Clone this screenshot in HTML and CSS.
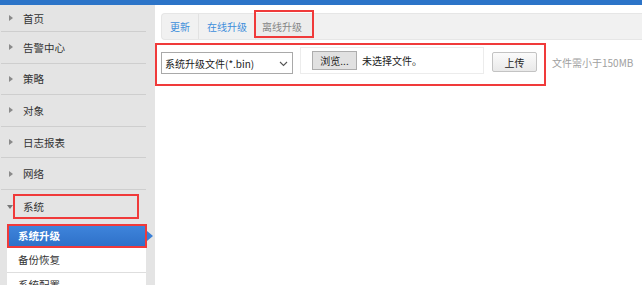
FILE: index.html
```html
<!DOCTYPE html>
<html lang="zh-CN">
<head>
<meta charset="utf-8">
<title>系统升级</title>
<link rel="stylesheet" href="styles.css">
</head>
<body>
<div class="topbar"></div>
<div class="layout">
  <aside class="sidebar">
    <ul class="menu">
      <li class="menu-item first"><span class="caret"></span><span class="label">首页</span></li>
      <li class="menu-item"><span class="caret"></span><span class="label">告警中心</span></li>
      <li class="menu-item"><span class="caret"></span><span class="label">策略</span></li>
      <li class="menu-item"><span class="caret"></span><span class="label">对象</span></li>
      <li class="menu-item"><span class="caret"></span><span class="label">日志报表</span></li>
      <li class="menu-item"><span class="caret"></span><span class="label">网络</span></li>
      <li class="menu-item open"><span class="caret down"></span><span class="label mark">系统</span></li>
    </ul>
    <ul class="submenu">
      <li class="sub active">系统升级<span class="pointer"></span></li>
      <li class="sub">备份恢复</li>
      <li class="sub">系统配置</li>
    </ul>
  </aside>
  <main class="main">
    <nav class="tabs">
      <span class="tab">更新</span>
      <span class="tab">在线升级</span>
      <span class="tab active">离线升级</span>
    </nav>
    <div class="form-row">
      <div class="upload-box">
        <div class="select">
          <span>系统升级文件(*.bin)</span>
          <svg class="chev" width="9" height="6" viewBox="0 0 9 6"><path d="M1 1 L4.5 4.5 L8 1" fill="none" stroke="#555" stroke-width="1.1"/></svg>
        </div>
        <div class="file">
          <span class="btn browse">浏览...</span>
          <span class="file-name">未选择文件。</span>
        </div>
        <span class="btn upload">上传</span>
      </div>
      <span class="hint">文件需小于150MB</span>
    </div>
  </main>
</div>
</body>
</html>
```
FILE: styles.css
```css
* { box-sizing: border-box; }
html, body { margin: 0; padding: 0; }
body {
  width: 642px;
  height: 285px;
  overflow: hidden;
  background: #fff;
  font-family: "Noto Sans CJK SC", "Noto Sans", sans-serif;
  font-size: 10px;
  color: #333;
}
ul { list-style: none; margin: 0; padding: 0; }

.topbar { height: 5px; background: #2c74c8; }

.layout { display: flex; height: 280px; }

.sidebar {
  width: 155px;
  flex: none;
  background: #e4e4e4;
}
.menu { margin-left: 1px; width: 145px; }
.menu-item {
  display: flex;
  align-items: center;
  height: 31.6px;
  border-bottom: 1px solid #cecece;
  font-size: 10.5px;
}
.menu-item.first { height: 27px; }
.menu-item.open { height: 34px; border-bottom: none; align-items: flex-start; padding-top: 4px; }
.caret {
  width: 0; height: 0;
  border-top: 3px solid transparent;
  border-bottom: 3px solid transparent;
  border-left: 4px solid #8a8a8a;
  margin-left: 8px;
  margin-right: 10px;
}
.caret.down {
  border-left: 3px solid transparent;
  border-right: 3px solid transparent;
  border-top: 4px solid #777;
  border-bottom: none;
  margin-left: 6px;
  margin-right: 0;
  margin-top: 11px;
}
.mark {
  display: flex;
  align-items: center;
  width: 126px;
  height: 25px;
  padding-left: 8px;
  border: 2px solid #f03a3a;
}

.submenu { margin-left: 7px; width: 139px; background: #fff; font-size: 10.5px; }
.sub {
  height: 25px;
  display: flex;
  align-items: center;
  padding-left: 11px;
  border-bottom: 1px solid #dedede;
}
.sub.active {
  position: relative;
  height: 24px;
  width: 140px;
  padding-left: 9px;
  color: #fff;
  font-weight: bold;
  background: linear-gradient(#3e84db, #2f71c9);
  border: 2px solid #f03a3a;
}
.pointer {
  position: absolute;
  right: -8px;
  top: 5px;
  width: 0; height: 0;
  border-top: 5px solid transparent;
  border-bottom: 5px solid transparent;
  border-left: 6px solid #3a7fd6;
}

.main { flex: 1; background: #fff; }

.tabs {
  display: flex;
  height: 27px;
  margin: 8px 0 0 6px;
  background: #f1f1f1;
  border: 1px solid #e6e6e6;
  border-right: none;
  border-radius: 4px 0 0 4px;
}
.tab {
  display: flex;
  align-items: center;
  padding: 0 8px;
  color: #3e8edb;
  border-right: 1px solid #e2e2e2;
}
.tab.active {
  position: relative;
  color: #868686;
  background: #ececec;
  padding: 0 12px 0 6px;
  border-right: none;
}
.tab.active::after {
  content: "";
  position: absolute;
  left: -2px; right: 0;
  top: -4px; bottom: 1px;
  border: 2px solid #f03a3a;
}

.form-row { display: flex; align-items: flex-start; margin-top: 3px; }
.upload-box {
  display: flex;
  align-items: flex-start;
  width: 391px;
  height: 43px;
  padding: 2px 0 0 4px;
  border: 2px solid #f03a3a;
}
.select {
  display: flex;
  align-items: center;
  justify-content: space-between;
  width: 132px;
  height: 22px;
  margin-top: 5px;
  padding: 0 4px 0 3px;
  border: 1px solid #a9a9a9;
  background: #fff;
  color: #222;
}
.chev { margin-top: 1px; }
.file {
  display: flex;
  align-items: center;
  width: 184px;
  height: 27px;
  margin-left: 7px;
  padding-left: 11px;
  border: 1px solid #ececec;
}
.btn {
  display: flex;
  align-items: center;
  justify-content: center;
  color: #222;
}
.browse {
  width: 45px;
  height: 19px;
  background: #e1e1e1;
  border: 1px solid #adadad;
}
.file-name { margin-left: 5px; color: #222; }
.upload {
  width: 45px;
  height: 20px;
  margin: 5px 0 0 8px;
  border: 1px solid #c3c3c3;
  border-radius: 2px;
  background: linear-gradient(#fbfbfb, #e9e9e9);
}
.hint { margin: 12px 0 0 6px; color: #a0a0a0; }
```
